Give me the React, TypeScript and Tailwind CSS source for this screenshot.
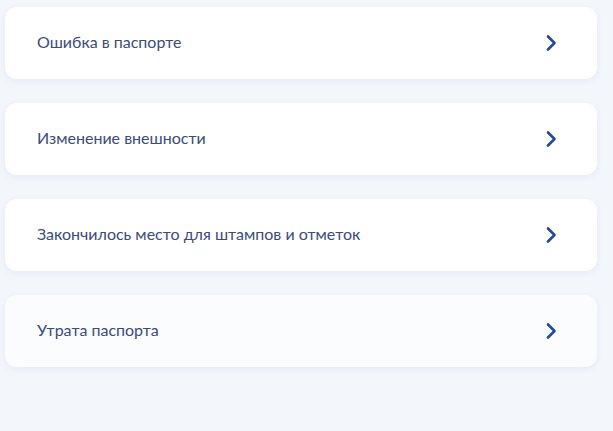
import React from "react";

const items = [
  "Ошибка в паспорте",
  "Изменение внешности",
  "Закончилось место для штампов и отметок",
  "Утрата паспорта",
];

function Chevron() {
  return (
    <svg width="12" height="18" viewBox="0 0 12 18" fill="none">
      <path d="M3 2.5 L9.5 9 L3 15.5" stroke="#1f4b9b" strokeWidth="2.6" strokeLinecap="round" strokeLinejoin="round" />
    </svg>
  );
}

export default function App() {
  return (
    <div className="w-[613px] h-[431px] bg-[#f3f6fb] overflow-hidden" style={{ fontFamily: "Lato, 'Noto Sans', sans-serif" }}>
      <div className="flex flex-col gap-[24px] pt-[7px] pl-[5px] w-[597px]">
        {items.map((t, i) => (
          <div
            key={t}
            className={`h-[72px] rounded-[12px] ${i === 3 ? "bg-[#fbfcfe]" : "bg-white"} shadow-[0_2px_6px_rgba(170,185,210,0.18)] flex items-center justify-between pl-[32px] pr-[40px]`}
          >
            <span className="text-[16px] text-[#3a4b7c] leading-none -mt-[2px]">{t}</span>
            <Chevron />
          </div>
        ))}
      </div>
    </div>
  );
}
